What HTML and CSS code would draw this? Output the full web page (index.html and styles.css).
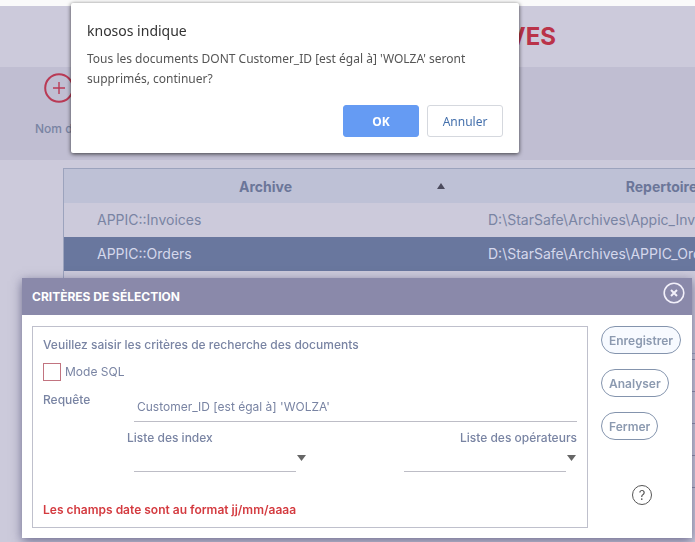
FILE: index.html
```html
<!DOCTYPE html>
<html lang="fr">
<head>
  <meta charset="UTF-8">
  <meta name="viewport" content="width=device-width, initial-scale=1.0">
  <title>Archives</title>
  <link rel="stylesheet" href="styles.css">
</head>
<body>
  <header class="page-header">
    <h1>ARCHIVES</h1>
  </header>

  <!-- Barre d'outils -->
  <div class="toolbar">
    <button type="button" class="add" aria-label="Ajouter">
      <svg width="30" height="30" viewBox="0 0 30 30" fill="none" stroke="#b93a55">
        <circle cx="15" cy="15" r="13.8" stroke-width="2"/>
        <path d="M15 9v12M9 15h12" stroke-width="1.4"/>
      </svg>
    </button>
    <span class="filter">Nom de l'archive</span>
  </div>

  <!-- Liste des archives -->
  <div class="list">
    <table>
      <thead>
        <tr>
          <th class="col-archive">
            <div class="sortable">
              <span>Archive</span>
              <svg width="8" height="6" viewBox="0 0 8 6"><path d="M4 0l4 6H0z" fill="#4c4b5e"/></svg>
            </div>
          </th>
          <th>Repertoire</th>
        </tr>
      </thead>
      <tbody>
        <tr>
          <td>APPIC::Invoices</td>
          <td>D:\StarSafe\Archives\Appic_Invoices</td>
        </tr>
        <tr class="selected">
          <td>APPIC::Orders</td>
          <td>D:\StarSafe\Archives\APPIC_Orders</td>
        </tr>
      </tbody>
    </table>
  </div>

  <div class="details">
    <div></div>
    <div></div>
    <div></div>
    <div></div>
    <div></div>
  </div>

  <!-- Critères de sélection -->
  <section class="modal">
    <div class="modal-header">
      <h2>CRITÈRES DE SÉLECTION</h2>
      <button type="button" class="close" aria-label="Fermer la fenêtre">
        <svg width="22" height="22" viewBox="0 0 22 22" fill="none" stroke="#f2f0fa">
          <circle cx="11" cy="11" r="9.8" stroke-width="1.6"/>
          <path d="M8 8l6 6M14 8l-6 6" stroke-width="2"/>
        </svg>
      </button>
    </div>
    <div class="modal-body">
      <form class="criteria" id="criteria">
        <p>Veuillez saisir les critères de recherche des documents</p>
        <label class="check"><input type="checkbox"> Mode SQL</label>
        <div class="query">
          <label for="requete">Requête</label>
          <input type="text" id="requete" value="Customer_ID [est égal à] 'WOLZA'">
        </div>
        <div class="lists">
          <div class="field">
            <label for="index">Liste des index</label>
            <div class="select">
              <select id="index"><option></option></select>
              <svg width="10" height="6" viewBox="0 0 10 6"><path d="M0 0h9L4.500 6z" fill="#666"/></svg>
            </div>
          </div>
          <div class="field right">
            <label for="operateurs">Liste des opérateurs</label>
            <div class="select">
              <select id="operateurs"><option></option></select>
              <svg width="10" height="6" viewBox="0 0 10 6"><path d="M0 0h9L4.500 6z" fill="#666"/></svg>
            </div>
          </div>
        </div>
        <p class="note">Les champs date sont au format jj/mm/aaaa</p>
      </form>
      <div class="actions">
        <button type="submit" form="criteria" class="active">Enregistrer</button>
        <button type="button">Analyser</button>
        <button type="button">Fermer</button>
        <a href="#aide" class="help">?</a>
      </div>
    </div>
  </section>

  <!-- Confirmation -->
  <div class="dialog" role="alertdialog" aria-labelledby="dialog-title">
    <h3 id="dialog-title">knosos indique</h3>
    <p>Tous les documents DONT Customer_ID [est égal à] 'WOLZA' seront supprimés, continuer?</p>
    <div class="dialog-buttons">
      <button type="button" class="ok">OK</button>
      <button type="button">Annuler</button>
    </div>
  </div>
</body>
</html>
```
FILE: styles.css
```css
* {
  box-sizing: border-box;
}
body {
  margin: 0;
  min-height: 100vh;
  border-top: 6px solid #fafafa;
  background: #cccadb;
  color: #7984a3;
  font-family: Inter, "Liberation Sans", sans-serif;
  font-size: 13px;
  overflow: hidden;
}
h1, h2, h3, p {
  margin: 0;
}
button {
  font-family: inherit;
  cursor: pointer;
}
svg {
  display: block;
}

.page-header {
  height: 61px;
  padding-right: 139px;
  text-align: right;
}
h1 {
  color: #ba3349;
  font-size: 24px;
  line-height: 61px;
}
.toolbar {
  display: flex;
  flex-direction: column;
  align-items: flex-start;
  gap: 18px;
  height: 93px;
  padding: 6px 35px;
  background: #c0bed2;
}
.add {
  margin-left: 9px;
  padding: 0;
  border: none;
  background: none;
}
.filter {
  font-size: 12px;
  font-weight: 500;
}

.list {
  margin: 8px 0 0 63px;
  height: 186px;
  border: 1px solid #9ca3bd;
  border-right: none;
  overflow: hidden;
}
table {
  width: 804px;
  border-collapse: collapse;
  table-layout: fixed;
}
th {
  height: 34px;
  padding: 0;
  background: #bec1d6;
  color: #6b7699;
  font-size: 14px;
}
.col-archive {
  width: 391px;
}
.sortable {
  display: flex;
  align-items: center;
  padding-right: 10px;
}
.sortable span {
  flex: 1;
  padding-left: 30px;
}
td {
  height: 34px;
  padding: 0 33px 2px;
  font-size: 14px;
  white-space: nowrap;
}
.selected {
  background: #69779e;
  color: #d5d8ec;
}
.details {
  margin: 5px 0 0 63px;
}
.details div {
  height: 32px;
  border-top: 1px solid #8d8da8;
}

.modal {
  position: fixed;
  top: 278px;
  left: 22px;
  right: 3px;
  background: #fff;
  box-shadow: 0 3px 10px rgba(70, 68, 110, 0.7);
}
.modal-header {
  display: flex;
  justify-content: space-between;
  height: 37px;
  padding: 4px 7px 0 10px;
  background: #8a89aa;
}
h2 {
  color: #fff;
  font-size: 12px;
  line-height: 29px;
}
.close {
  height: 22px;
  padding: 0;
  border: none;
  background: none;
}
.modal-body {
  display: flex;
  gap: 13px;
  padding: 11px 10px 10px;
}
.criteria {
  flex: 1;
  height: 202px;
  padding: 10px;
  border: 1px solid #bfc0cc;
  font-size: 12px;
  font-weight: 500;
  line-height: 16px;
}
.check {
  display: flex;
  align-items: center;
  gap: 4px;
  margin-top: 10px;
  font-weight: 400;
}
.check input {
  appearance: none;
  width: 18px;
  height: 18px;
  margin: 0;
  border: 1px solid #c27480;
}
.query {
  display: flex;
  margin-top: 11px;
}
.query label {
  width: 91px;
}
.query input {
  flex: 1;
  height: 30px;
  padding: 0 3px;
  border: none;
  border-bottom: 1px solid #bdbdc6;
  background: none;
  color: inherit;
  font: inherit;
  font-weight: 400;
}
.lists {
  display: flex;
  justify-content: space-between;
  margin-top: 8px;
  padding-left: 84px;
}
.field .select {
  display: flex;
  gap: 1px;
  margin-left: 7px;
}
.field.right {
  text-align: right;
}
.select select {
  appearance: none;
  width: 162px;
  height: 26px;
  border: none;
  border-bottom: 1px solid #bdbdc6;
  border-radius: 0;
  background: none;
}
.select svg {
  margin-top: 9px;
}
.note {
  margin-top: 30px;
  color: #d43b40;
  font-size: 12px;
  font-weight: 600;
}
.actions {
  display: flex;
  flex-direction: column;
  align-items: flex-start;
  gap: 15px;
  width: 81px;
}
.actions button {
  height: 28px;
  padding: 0 7px;
  border: 1px solid #8494ad;
  border-radius: 14px;
  background: #fff;
  color: #8c9ab0;
  font-size: 12px;
  font-weight: 600;
}
.actions .active {
  background: #f7faff;
}
.help {
  width: 20px;
  height: 20px;
  margin: 30px 0 0 31px;
  border: 1px solid #555;
  border-radius: 50%;
  color: #555;
  font-size: 13px;
  line-height: 18px;
  text-align: center;
  text-decoration: none;
}

.dialog {
  position: fixed;
  top: 3px;
  left: 71px;
  width: 448px;
  padding: 16px;
  border-radius: 2px;
  background: #fff;
  box-shadow: 0 1px 4px rgba(0, 0, 0, 0.7);
  color: #555;
  font-family: "Noto Sans", sans-serif;
}
h3 {
  color: #333;
  font-size: 14px;
  font-weight: 400;
  line-height: 24px;
}
.dialog p {
  margin-top: 6px;
  font-size: 12px;
  line-height: 20px;
}
.dialog-buttons {
  display: flex;
  justify-content: flex-end;
  gap: 8px;
  margin-top: 16px;
}
.dialog-buttons button {
  width: 76px;
  height: 32px;
  border: 1px solid #d5d8de;
  border-radius: 3px;
  background: #fff;
  color: #4470ac;
  font-size: 12px;
}
.dialog-buttons .ok {
  border-color: #659bf3;
  background: #659bf3;
  color: #fff;
  font-weight: 700;
}
```
